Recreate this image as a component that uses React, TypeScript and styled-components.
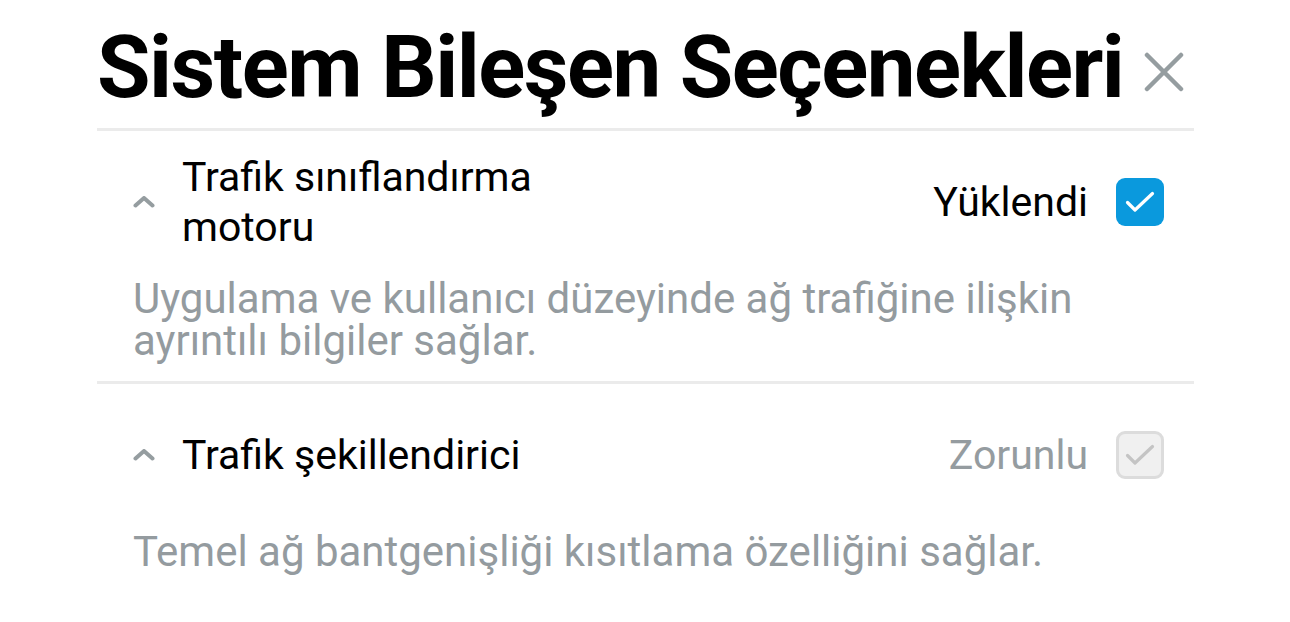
import React from 'react';
import styled, { createGlobalStyle } from 'styled-components';

const GlobalStyle = createGlobalStyle`
  html, body {
    margin: 0;
    padding: 0;
    background: #ffffff;
  }
  body {
    font-family: Roboto, "Noto Sans", "Liberation Sans", sans-serif;
    color: #000;
  }
`;

const Panel = styled.div`
  width: 1097px;
  margin-left: 97px;
  padding-top: 17px;
`;

const Header = styled.div`
  display: flex;
  align-items: center;
  justify-content: space-between;
  padding-right: 10px;
  padding-bottom: 11px;
  border-bottom: 3px solid #ebebeb;
`;

const Title = styled.h1`
  margin: 0;
  font-size: 87px;
  font-weight: 700;
  line-height: 100px;
  letter-spacing: -1.5px;
  white-space: nowrap;
`;

const CloseButton = styled.button`
  border: none;
  background: none;
  padding: 0;
  margin-top: 10px;
  width: 40px;
  height: 40px;
  flex-shrink: 0;
  display: flex;
  align-items: center;
  justify-content: center;
  cursor: pointer;
`;

const Section = styled.div<{ $last?: boolean }>`
  padding: 0 30px 0 36px;
  border-bottom: ${p => (p.$last ? 'none' : '3px solid #ebebeb')};
`;

const Row = styled.div<{ $height: number }>`
  display: flex;
  align-items: center;
  height: ${p => p.$height}px;
`;

const Chevron = styled.span`
  width: 22px;
  flex-shrink: 0;
  display: flex;
  margin-right: 27px;
`;

const Label = styled.div`
  flex: 1;
  font-size: 41px;
  line-height: 50px;
  color: #000;
  max-width: 420px;
`;

const Status = styled.span<{ $muted?: boolean }>`
  margin-left: auto;
  margin-right: 28px;
  font-size: 41px;
  color: ${p => (p.$muted ? '#959ca0' : '#000')};
`;

const Check = styled.span<{ $disabled?: boolean }>`
  width: 48px;
  height: 48px;
  flex-shrink: 0;
  box-sizing: border-box;
  border-radius: 9px;
  display: flex;
  align-items: center;
  justify-content: center;
  background: ${p => (p.$disabled ? '#f0f0f0' : '#0a99dd')};
  border: ${p => (p.$disabled ? '3px solid #dcdcdc' : 'none')};
`;

const Description = styled.p<{ $pad: number }>`
  margin: 5px 0 0;
  font-size: 42px;
  line-height: 42px;
  color: #949b9f;
  padding-bottom: ${p => p.$pad}px;
`;

const ChevronUp = () => (
  <svg width="22" height="12" viewBox="0 0 22 12">
    <path d="M2.5 9.5 L11 2 L19.5 9.5" fill="none" stroke="#959da0" strokeWidth="4" strokeLinecap="round" strokeLinejoin="round" />
  </svg>
);

const CheckMark = ({ color }: { color: string }) => (
  <svg width="30" height="22" viewBox="0 0 30 22">
    <path d="M2.5 11.5 L10 19 L27.5 2.5" fill="none" stroke={color} strokeWidth="3.2" strokeLinecap="round" strokeLinejoin="round" />
  </svg>
);

interface Component {
  name: string;
  status: string;
  required: boolean;
  description: string;
  rowHeight: number;
  pad: number;
}

const components: Component[] = [
  {
    name: 'Trafik sınıflandırma motoru',
    status: 'Yüklendi',
    required: false,
    description: 'Uygulama ve kullanıcı düzeyinde ağ trafiğine ilişkin ayrıntılı bilgiler sağlar.',
    rowHeight: 142,
    pad: 19,
  },
  {
    name: 'Trafik şekillendirici',
    status: 'Zorunlu',
    required: true,
    description: 'Temel ağ bantgenişliği kısıtlama özelliğini sağlar.',
    rowHeight: 142,
    pad: 40,
  },
];

export default function App() {
  return (
    <>
      <GlobalStyle />
      <Panel>
        <Header>
          <Title>Sistem Bileşen Seçenekleri</Title>
          <CloseButton aria-label="Kapat">
            <svg width="40" height="40" viewBox="0 0 40 40">
              <path d="M3 3 L37 37 M37 3 L3 37" stroke="#959da0" strokeWidth="4.5" strokeLinecap="round" />
            </svg>
          </CloseButton>
        </Header>
        {components.map((c, i) => (
          <Section key={c.name} $last={i === components.length - 1}>
            <Row $height={c.rowHeight}>
              <Chevron>
                <ChevronUp />
              </Chevron>
              <Label>{c.name}</Label>
              <Status $muted={c.required}>{c.status}</Status>
              <Check $disabled={c.required}>
                <CheckMark color={c.required ? '#c4c4c4' : '#ffffff'} />
              </Check>
            </Row>
            <Description $pad={c.pad}>{c.description}</Description>
          </Section>
        ))}
      </Panel>
    </>
  );
}
